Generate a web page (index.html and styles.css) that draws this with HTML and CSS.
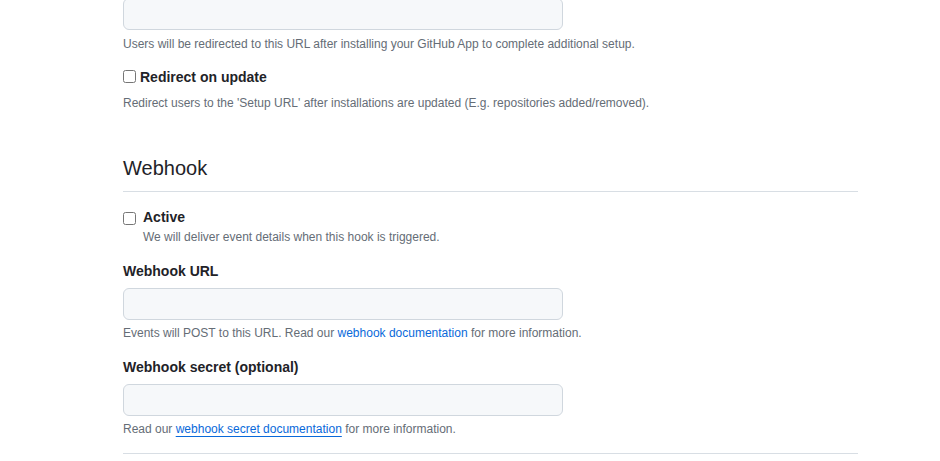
FILE: index.html
```html
<!DOCTYPE html>
<html lang="en">
<head>
<meta charset="utf-8">
<title>GitHub App settings</title>
<link rel="stylesheet" href="styles.css">
</head>
<body>
<div class="page">
  <div class="form-group first">
    <input class="form-control" type="text" aria-label="Setup URL">
    <p class="note note-first">Users will be redirected to this URL after installing your GitHub App to complete additional setup.</p>
  </div>

  <div class="inline-check">
    <label class="inline-label"><input type="checkbox" class="cb"> Redirect on update</label>
  </div>
  <p class="note note-spaced">Redirect users to the 'Setup URL' after installations are updated (E.g. repositories added/removed).</p>

  <div class="subhead">
    <h2 class="subhead-heading">Webhook</h2>
  </div>

  <div class="form-checkbox">
    <input type="checkbox" class="cb cb-float" id="active">
    <label for="active" class="check-label">Active</label>
    <p class="note tight">We will deliver event details when this hook is triggered.</p>
  </div>

  <div class="form-group">
    <div class="group-header"><label for="hook-url" class="label">Webhook URL</label></div>
    <input class="form-control" type="text" id="hook-url">
    <p class="note">Events will POST to this URL. Read our <a class="link" href="#">webhook documentation</a> for more information.</p>
  </div>

  <div class="form-group">
    <div class="group-header"><label for="hook-secret" class="label">Webhook secret (optional)</label></div>
    <input class="form-control" type="text" id="hook-secret">
    <p class="note">Read our <a class="link underline" href="#">webhook secret documentation</a> for more information.</p>
  </div>

  <hr class="divider">
</div>
</body>
</html>
```
FILE: styles.css
```css
* { box-sizing: border-box; }
html, body { margin: 0; padding: 0; background: #ffffff; }
body {
  font-family: "Liberation Sans", Arial, sans-serif;
  font-size: 14px;
  line-height: 1.5;
  color: #1f2328;
}
.page {
  width: 735px;
  margin-left: 123px;
  margin-top: -2px;
}
.form-group { margin: 15px 0; }
.form-group.first { margin-top: 0; margin-bottom: 14px; }
.group-header { margin: 0 0 6px; }
.label { font-weight: 700; font-size: 14px; }
.form-control {
  display: block;
  width: 440px;
  height: 32px;
  padding: 5px 12px;
  font: 14px/20px "Liberation Sans", Arial, sans-serif;
  color: #1f2328;
  background: #f6f8fa;
  border: 1px solid #d0d7de;
  border-radius: 6px;
  outline: none;
  margin: 0;
}
.note {
  margin: 4px 0 2px;
  font-size: 12px;
  line-height: 18px;
  color: #656d76;
  min-height: 17px;
}
.note.note-first { margin-top: 5px; margin-bottom: 0; }
.note.tight { margin: 0; }
.note-spaced { margin-top: 6px; margin-bottom: 0; }
.inline-check { margin-top: 14px; }
.inline-label {
  display: flex;
  align-items: flex-start;
  font-weight: 700;
  font-size: 14px;
  line-height: 21px;
}
.cb {
  width: 13px;
  height: 13px;
  margin: 3px 4px 0 0;
  flex: none;
}
.subhead {
  margin-top: 41px;
  margin-bottom: 15px;
  padding-bottom: 8px;
  border-bottom: 1px solid #d8dee4;
}
.subhead-heading {
  margin: 0;
  font-size: 20px;
  font-weight: 400;
  line-height: 30px;
}
.form-checkbox {
  padding-left: 20px;
  margin: 0 0 15px;
}
.cb-float {
  float: left;
  margin: 5px 0 0 -20px;
}
.check-label {
  font-weight: 700;
  font-size: 14px;
  line-height: 21px;
  display: block;
}
.link { color: #0969da; text-decoration: none; }
.link.underline {
  text-decoration: underline;
  text-underline-offset: 3px;
  text-decoration-thickness: 1px;
}
.divider {
  margin: 15px 0 0;
  height: 0;
  border: 0;
  border-top: 1px solid #d8dee4;
}
```
